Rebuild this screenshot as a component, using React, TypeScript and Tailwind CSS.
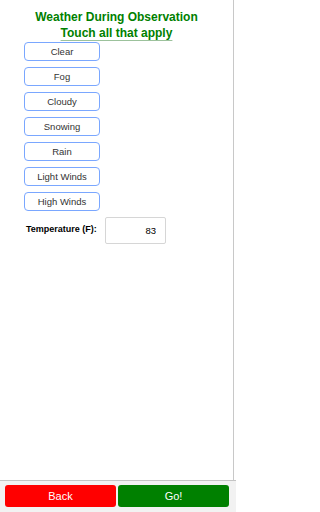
import { useState } from "react";

const conditions = ["Clear", "Fog", "Cloudy", "Snowing", "Rain", "Light Winds", "High Winds"];

export default function App() {
  const [temp, setTemp] = useState("83");
  const [picked, setPicked] = useState<string[]>([]);

  const toggle = (c: string) =>
    setPicked((p) => (p.includes(c) ? p.filter((x) => x !== c) : [...p, c]));

  return (
    <div className="w-[236px] h-[512px] flex flex-col bg-white font-['Liberation_Sans',Arial,sans-serif]">
      <div className="flex-1 w-[234px] border-r border-[#c8c8c8] flex flex-col">
        <div className="pt-[9px] text-center text-[12px] leading-[16px] font-bold text-[#008000]">
          <div>Weather During Observation</div>
          <div className="underline decoration-[#9cc29c] underline-offset-[3px]">Touch all that apply</div>
        </div>
        <div className="mt-[1px] pl-[24px] flex flex-col gap-[6px]">
          {conditions.map((c) => (
            <button
              key={c}
              onClick={() => toggle(c)}
              className={
                "w-[76px] h-[19px] rounded-[4px] border border-[#7aa7ff] text-[9.5px] text-[#333] leading-none " +
                (picked.includes(c) ? "bg-[#dbe8ff]" : "bg-white")
              }
            >
              {c}
            </button>
          ))}
        </div>
        <div className="mt-[6px] pl-[26px] flex items-start">
          <label className="w-[79px] pt-[6px] text-[9px] font-bold text-black">Temperature (F):</label>
          <input
            value={temp}
            onChange={(e) => setTemp(e.target.value)}
            className="w-[61px] h-[27px] rounded-[2px] border border-[#d6d6d6] text-right pr-[9px] text-[9.5px] text-black outline-none"
          />
        </div>
      </div>
      <div className="h-[32px] border-t border-[#c4c4c4] bg-[#f2f2f2] flex gap-[2px] pl-[5px] pr-[7px] pt-[4px]">
        <button className="flex-1 h-[22px] rounded-[3px] bg-[#ff0000] text-white text-[11px]">Back</button>
        <button className="flex-1 h-[22px] rounded-[3px] bg-[#008000] text-white text-[11px]">Go!</button>
      </div>
    </div>
  );
}
